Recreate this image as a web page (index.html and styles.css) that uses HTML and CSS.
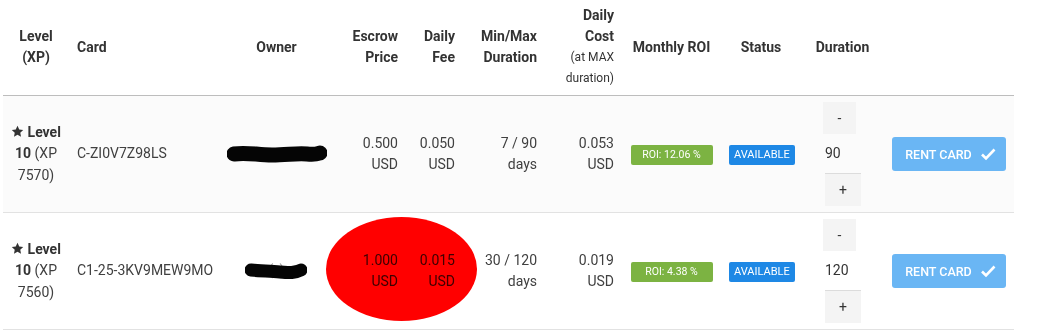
FILE: index.html
```html
<!DOCTYPE html>
<html>
<head>
<meta charset="utf-8">
<link rel="stylesheet" href="styles.css">
</head>
<body>
<div class="wrap">
<table class="cards">
  <colgroup>
    <col class="c-level"><col class="c-card"><col class="c-owner"><col class="c-escrow"><col class="c-fee"><col class="c-dur"><col class="c-cost"><col class="c-roi"><col class="c-status"><col class="c-spin"><col class="c-act">
  </colgroup>
  <thead>
    <tr>
      <th class="center">Level (XP)</th>
      <th class="left">Card</th>
      <th class="center">Owner</th>
      <th class="right">Escrow Price</th>
      <th class="right">Daily Fee</th>
      <th class="right">Min/Max Duration</th>
      <th class="right">Daily Cost <small>(at MAX duration)</small></th>
      <th class="center">Monthly ROI</th>
      <th class="center">Status</th>
      <th class="center">Duration</th>
      <th></th>
    </tr>
  </thead>
  <tbody>
    <tr class="odd">
      <td class="center"><b><svg class="star" viewBox="0 0 24 24"><path d="M12 1.5l3.2 6.9 7.3.9-5.4 5.1 1.4 7.4L12 18.2l-6.5 3.6 1.4-7.4-5.4-5.1 7.3-.9z"/></svg> Level</b> <b>10</b> <span>(XP</span> <span>7570)</span></td>
      <td class="left nowrap">C-ZI0V7Z98LS</td>
      <td class="center"><span class="owner">someone<svg class="scribble s1" viewBox="0 0 100 20"><path d="M7 10 C 20 8, 30 11, 45 11 S 70 9, 80 10 S 92 9, 93 9"/></svg></span></td>
      <td class="right">0.500 USD</td>
      <td class="right">0.050 USD</td>
      <td class="right">7 / 90 days</td>
      <td class="right">0.053 USD</td>
      <td class="center"><span class="badge roi">ROI: 12.06 %</span></td>
      <td class="center"><span class="badge status">AVAILABLE</span></td>
      <td class="spin-cell">
        <div class="spin">
          <button class="spin-btn minus">-</button>
          <div class="spin-val">90</div>
          <button class="spin-btn plus">+</button>
        </div>
      </td>
      <td class="act"><button class="rent">RENT CARD <svg class="check" viewBox="0 0 16 14"><path d="M2 7.5 L6 11.5 L14.5 2.5"/></svg></button></td>
    </tr>
    <tr>
      <td class="center"><b><svg class="star" viewBox="0 0 24 24"><path d="M12 1.5l3.2 6.9 7.3.9-5.4 5.1 1.4 7.4L12 18.2l-6.5 3.6 1.4-7.4-5.4-5.1 7.3-.9z"/></svg> Level</b> <b>10</b> <span>(XP</span> <span>7560)</span></td>
      <td class="left nowrap">C1-25-3KV9MEW9MO</td>
      <td class="center"><span class="owner faint">(_)<svg class="scribble s2" viewBox="0 0 62 18"><path d="M6 8 C 15 9, 25 9, 35 10 S 50 11, 56 8"/></svg></span></td>
      <td class="right">1.000 USD</td>
      <td class="right">0.015 USD</td>
      <td class="right">30 / 120 days</td>
      <td class="right">0.019 USD</td>
      <td class="center"><span class="badge roi">ROI: 4.38 %</span></td>
      <td class="center"><span class="badge status">AVAILABLE</span></td>
      <td class="spin-cell">
        <div class="spin">
          <button class="spin-btn minus">-</button>
          <div class="spin-val">120</div>
          <button class="spin-btn plus">+</button>
        </div>
      </td>
      <td class="act"><button class="rent">RENT CARD <svg class="check" viewBox="0 0 16 14"><path d="M2 7.5 L6 11.5 L14.5 2.5"/></svg></button></td>
    </tr>
  </tbody>
</table>
<div class="redact"></div>
</div>
</body>
</html>
```

FILE: styles.css
```css
html, body {
  margin: 0;
  padding: 0;
  background: #fff;
}
body {
  font-family: Roboto, "Liberation Sans", Arial, sans-serif;
  font-size: 14px;
  color: #404040;
}
.wrap {
  position: relative;
  padding-left: 3px;
  width: 1011px;
}
.cards {
  width: 1011px;
  table-layout: fixed;
  border-collapse: collapse;
  border-spacing: 0;
}
.c-level { width: 66px; }
.c-card { width: 141px; }
.c-owner { width: 133px; }
.c-escrow { width: 63px; }
.c-fee { width: 57px; }
.c-dur { width: 82px; }
.c-cost { width: 77px; }
.c-roi { width: 99px; }
.c-status { width: 80px; }
.c-spin { width: 83px; }
.c-act { width: 130px; }

th {
  font-weight: 700;
  color: #333;
  line-height: 21px;
  padding: 5px 8px 6px;
  height: 84px;
  vertical-align: middle;
  border-bottom: 1px solid #bdbdbd;
}
th small {
  display: block;
  font-size: 12px;
  font-weight: 400;
  line-height: 21px;
}
td {
  line-height: 21.5px;
  padding: 6px 8px;
  height: 104px;
  vertical-align: middle;
  border-bottom: 1px solid #e2e2e2;
}
tr.odd td { background: #fbfbfb; }
.center { text-align: center; }
.left { text-align: left; }
.right { text-align: right; }
.nowrap { white-space: nowrap; }
td b { font-weight: 700; color: #333; }
.star {
  width: 13px;
  height: 13px;
  fill: #333;
  vertical-align: -1px;
}
.owner {
  position: relative;
  display: inline-block;
  color: #999;
}
.owner .scribble {
  position: absolute;
  left: 50%;
  top: 50%;
  transform: translate(-50%, -50%);
  fill: none;
  stroke: #050505;
  stroke-linecap: round;
  filter: blur(0.6px);
}
.s1 { width: 100px; height: 20px; stroke-width: 15; }
.s2 { width: 62px; height: 18px; stroke-width: 13; }
.badge {
  display: inline-block;
  color: #fff;
  border-radius: 2px;
  line-height: 20px;
  height: 20px;
  vertical-align: middle;
}
.roi {
  width: 82px;
  background: #7cb342;
  font-size: 10.5px;
}
.status {
  background: #1e88e5;
  font-size: 11px;
  padding: 0 5px;
}
.spin-cell { padding-left: 22px; padding-right: 0; }
.spin {
  display: flex;
  flex-direction: column;
  align-items: flex-start;
}
.spin-btn {
  border: 0;
  margin: 0;
  padding: 0;
  font-family: inherit;
  font-size: 14px;
  color: #333;
  background: #f4f4f4;
}
.minus { width: 33px; height: 32px; }
.plus {
  width: 36px;
  height: 33px;
  margin-left: 2px;
  border-top: 1px solid #dcdcdc;
}
.spin-val {
  height: 39px;
  line-height: 39px;
  padding-left: 2px;
  color: #333;
}
.act { padding: 6px 8px; }
.rent {
  width: 114px;
  height: 34px;
  border: 0;
  border-radius: 3px;
  background: #6ab6f4;
  color: #fff;
  font-family: inherit;
  font-size: 12.5px;
  font-weight: 500;
  display: flex;
  align-items: center;
  justify-content: center;
  gap: 8px;
  padding: 0 0 0 3px;
}
.check {
  width: 16px;
  height: 14px;
  fill: none;
  stroke: #fff;
  stroke-width: 2.6;
}
.redact {
  position: absolute;
  left: 326px;
  top: 217px;
  width: 151px;
  height: 104px;
  border-radius: 50%;
  background: #ff0000;
  mix-blend-mode: multiply;
  pointer-events: none;
}
```
